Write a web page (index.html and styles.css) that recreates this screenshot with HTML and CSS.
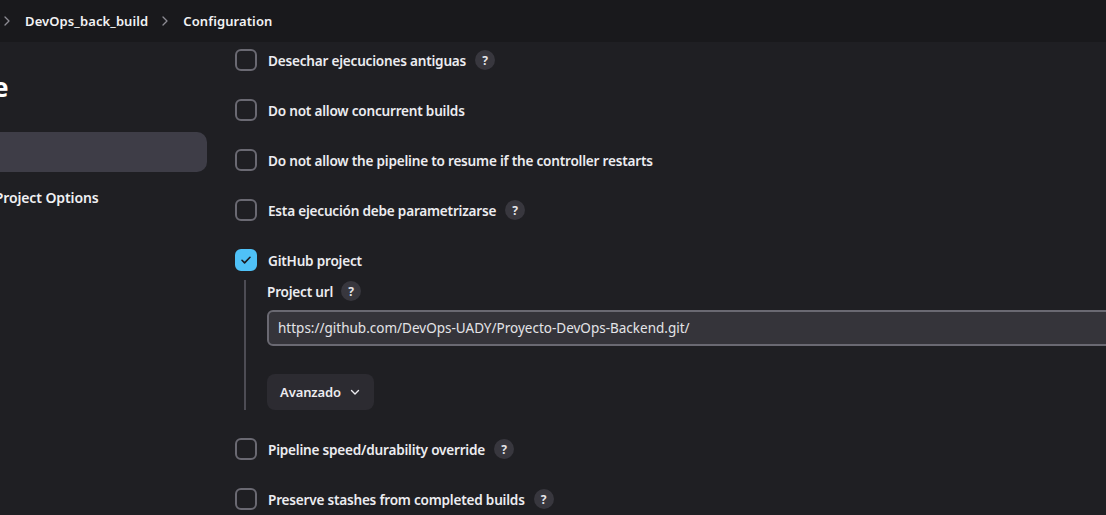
FILE: index.html
```html
<!DOCTYPE html>
<html lang="es">
<head>
<meta charset="utf-8">
<title>Configuration</title>
<link rel="stylesheet" href="styles.css">
</head>
<body>
<header class="topbar">
  <nav class="crumbs">
    <span class="crumb">Dashboard</span>
    <span class="sep"><svg width="12" height="12" viewBox="0 0 12 12"><path d="M4 2l4 4-4 4" fill="none" stroke="currentColor" stroke-width="1.3" stroke-linecap="round" stroke-linejoin="round"/></svg></span>
    <span class="crumb">DevOps_back_build</span>
    <span class="sep"><svg width="12" height="12" viewBox="0 0 12 12"><path d="M4 2l4 4-4 4" fill="none" stroke="currentColor" stroke-width="1.3" stroke-linecap="round" stroke-linejoin="round"/></svg></span>
    <span class="crumb">Configuration</span>
  </nav>
</header>
<div class="page">
  <aside class="sidebar">
    <h1 class="title">Configure</h1>
    <ul class="tasks">
      <li class="task active">General</li>
      <li class="task">Advanced Project Options</li>
    </ul>
  </aside>
  <main class="content">
    <div class="row"><span class="box"></span><span class="label">Desechar ejecuciones antiguas</span><span class="help">?</span></div>
    <div class="row"><span class="box"></span><span class="label">Do not allow concurrent builds</span></div>
    <div class="row"><span class="box"></span><span class="label">Do not allow the pipeline to resume if the controller restarts</span></div>
    <div class="row"><span class="box"></span><span class="label">Esta ejecución debe parametrizarse</span><span class="help">?</span></div>
    <div class="row row-tight"><span class="box checked"><svg width="14" height="14" viewBox="0 0 14 14"><path d="M3 7.3l2.6 2.6L11 4.3" fill="none" stroke="#1b1b20" stroke-width="1.6" stroke-linecap="round" stroke-linejoin="round"/></svg></span><span class="label">GitHub project</span></div>
    <div class="nested">
      <div class="field-label"><span class="label">Project url</span><span class="help">?</span></div>
      <div class="input">https://github.com/DevOps-UADY/Proyecto-DevOps-Backend.git/</div>
      <button class="adv">Avanzado <svg width="12" height="12" viewBox="0 0 12 12"><path d="M2.5 4.5L6 8l3.5-3.5" fill="none" stroke="currentColor" stroke-width="1.4" stroke-linecap="round" stroke-linejoin="round"/></svg></button>
    </div>
    <div class="row"><span class="box"></span><span class="label">Pipeline speed/durability override</span><span class="help">?</span></div>
    <div class="row"><span class="box"></span><span class="label">Preserve stashes from completed builds</span><span class="help">?</span></div>
  </main>
</div>
</body>
</html>
```
FILE: styles.css
```css
* { box-sizing: border-box; }
html, body {
  margin: 0;
  padding: 0;
  background: #1f1f23;
  color: #e9e9ed;
  font-family: "Noto Sans", "Open Sans", sans-serif;
  overflow: hidden;
  height: 515px;
}
.topbar {
  height: 42px;
  background: #19191c;
  display: flex;
  align-items: center;
  overflow: hidden;
}
.crumbs {
  display: flex;
  align-items: center;
  margin-left: -82px;
  font-size: 13px;
  font-weight: 600;
  color: #f2f2f4;
  letter-spacing: 0.1px;
}
.crumb { padding: 0 2px; }
.sep {
  display: inline-flex;
  color: #8d8c94;
  margin: 0 10px 0 9px;
}
.page {
  display: flex;
  margin-left: -80px;
  gap: 28px;
}
.sidebar {
  width: 287px;
  flex: none;
}
.title {
  margin: 26px 0 0 -44px;
  font-size: 27px;
  font-weight: 700;
  line-height: 38px;
  color: #ffffff;
  white-space: nowrap;
}
.tasks {
  list-style: none;
  margin: 26px 0 0 0;
  padding: 0;
}
.task {
  height: 40px;
  display: flex;
  align-items: center;
  padding-left: 12px;
  border-radius: 10px;
  font-size: 14px;
  font-weight: 600;
  margin-bottom: 5px;
  color: #f0f0f3;
  text-indent: -7px;
  letter-spacing: -0.1px;
  white-space: nowrap;
}
.task.active { background: #3e3d47; }
.content {
  padding-top: 7px;
  width: 1100px;
  flex: none;
}
.row {
  display: flex;
  align-items: center;
  height: 22px;
  margin-bottom: 28px;
}
.row-tight { margin-bottom: 9px; }
.box {
  width: 22px;
  height: 22px;
  border: 2px solid #6a6972;
  border-radius: 6px;
  flex: none;
  margin-right: 11px;
  display: flex;
  align-items: center;
  justify-content: center;
}
.box.checked {
  background: #4fc1f7;
  border-color: #4fc1f7;
}
.label {
  font-size: 13.6px;
  font-weight: 600;
  color: #ececf0;
  letter-spacing: -0.22px;
}
.help {
  width: 20px;
  height: 20px;
  border-radius: 50%;
  background: #38373e;
  color: #e6e6ea;
  font-size: 12px;
  font-weight: 700;
  display: inline-flex;
  align-items: center;
  justify-content: center;
  margin-left: 9px;
}
.nested {
  margin-left: 9px;
  border-left: 2px solid #4d4c54;
  padding-left: 21px;
  margin-bottom: 28px;
}
.field-label {
  display: flex;
  align-items: center;
  height: 22px;
  margin-bottom: 8px;
}
.field-label .help { margin-left: 8px; }
.input {
  height: 36px;
  width: 900px;
  border: 2px solid #6a6972;
  background: #35343a;
  border-radius: 6px;
  padding: 0 9px;
  display: flex;
  align-items: center;
  font-size: 13.5px;
  color: #e4e4e8;
  margin-bottom: 28px;
}
.adv {
  height: 36px;
  padding: 0 13px;
  border: none;
  border-radius: 8px;
  background: #2c2b31;
  color: #ececf0;
  font-family: inherit;
  font-size: 13px;
  font-weight: 600;
  display: inline-flex;
  align-items: center;
  gap: 8px;
  letter-spacing: -0.1px;
}
```
